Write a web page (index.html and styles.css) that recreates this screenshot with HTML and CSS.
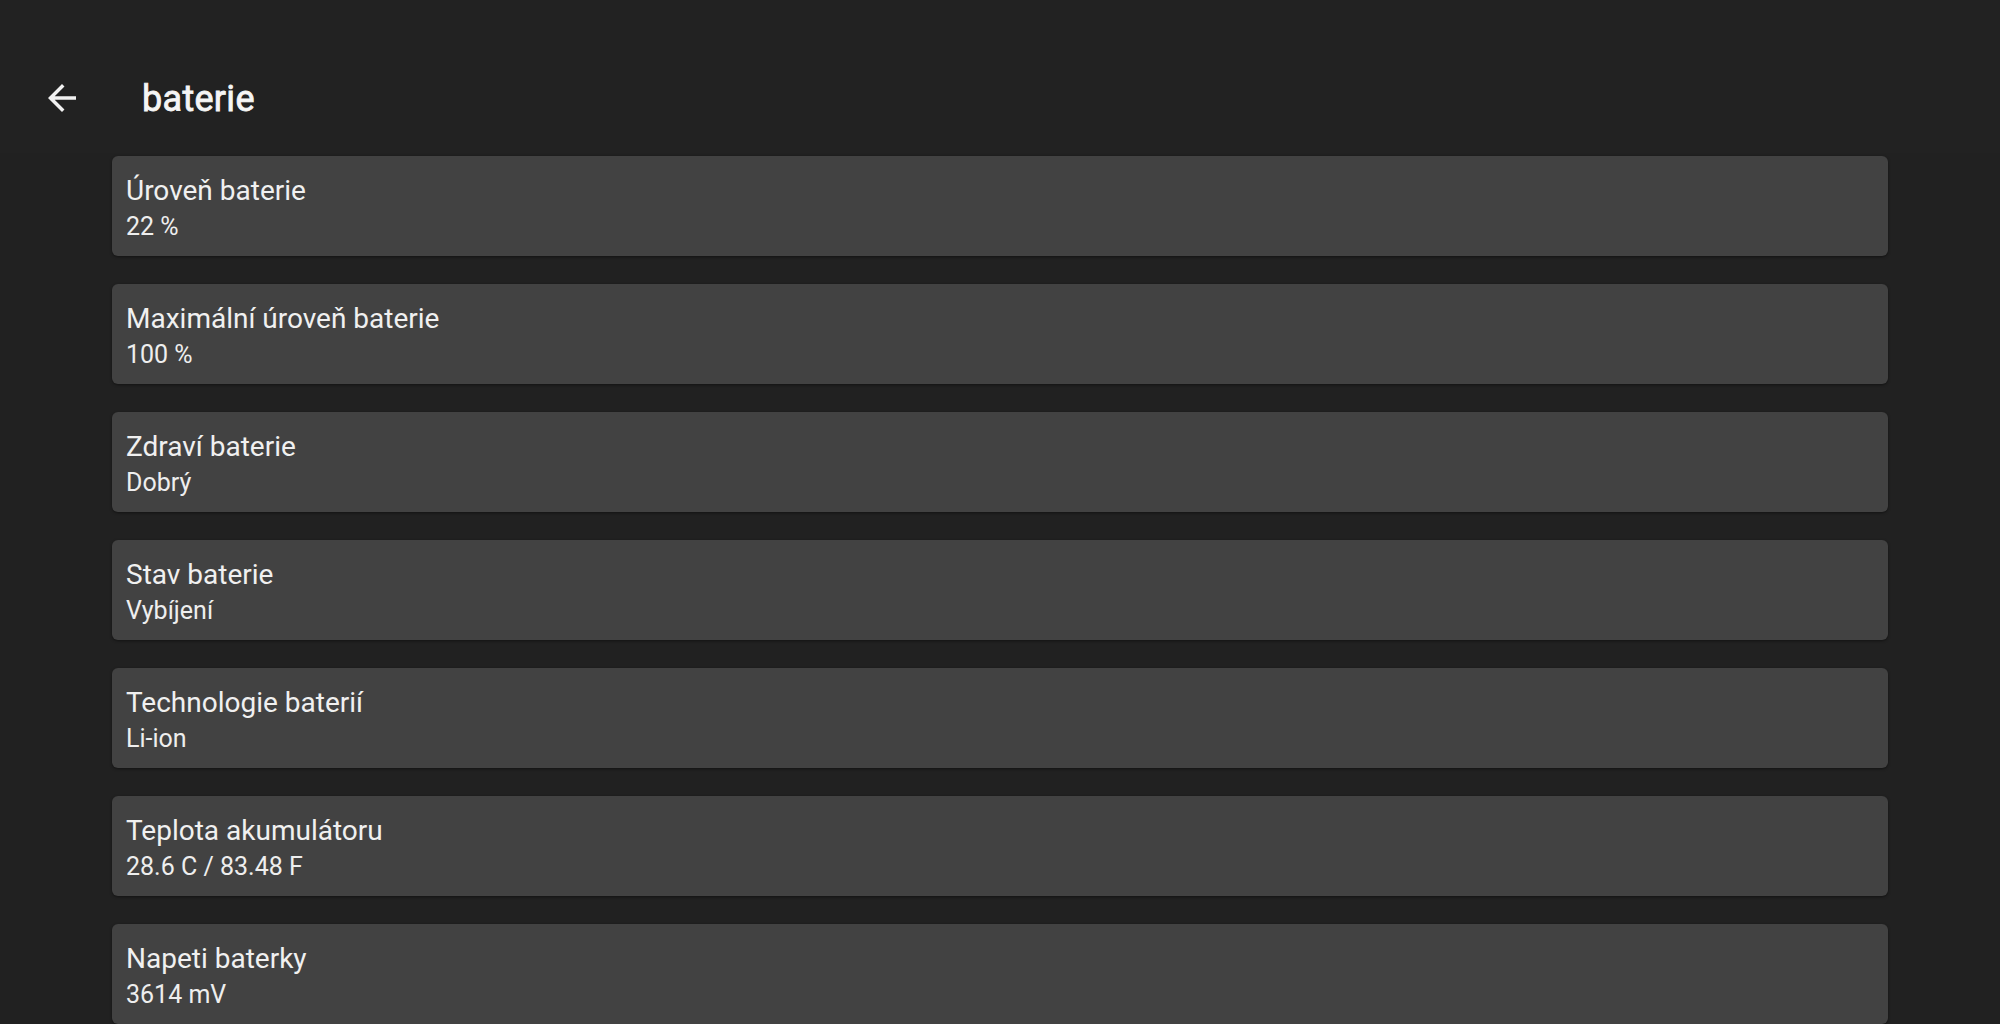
FILE: index.html
```html
<!DOCTYPE html>
<html lang="cs">
<head>
<meta charset="utf-8">
<title>baterie</title>
<link rel="stylesheet" href="styles.css">
</head>
<body>
<header class="toolbar">
  <button class="back" aria-label="Zpět">
    <svg viewBox="0 0 24 24" width="42" height="42"><path fill="currentColor" d="M20 11H7.83l5.59-5.59L12 4l-8 8 8 8 1.41-1.41L7.83 13H20v-2z"/></svg>
  </button>
  <h1 class="title">baterie</h1>
</header>
<main class="list">
  <div class="card"><div class="card-title">Úroveň baterie</div><div class="card-value">22 %</div></div>
  <div class="card"><div class="card-title">Maximální úroveň baterie</div><div class="card-value">100 %</div></div>
  <div class="card"><div class="card-title">Zdraví baterie</div><div class="card-value">Dobrý</div></div>
  <div class="card"><div class="card-title">Stav baterie</div><div class="card-value">Vybíjení</div></div>
  <div class="card"><div class="card-title">Technologie baterií</div><div class="card-value">Li-ion</div></div>
  <div class="card"><div class="card-title">Teplota akumulátoru</div><div class="card-value">28.6 C / 83.48 F</div></div>
  <div class="card"><div class="card-title">Napeti baterky</div><div class="card-value">3614 mV</div></div>
</main>
</body>
</html>
```
FILE: styles.css
```css
html, body {
  margin: 0;
  padding: 0;
  background: #212121;
  font-family: Roboto, "Noto Sans", sans-serif;
  color: #efefef;
  overflow: hidden;
  height: 1024px;
}
.toolbar {
  height: 153px;
  background: #222222;
  display: flex;
  align-items: flex-start;
  box-sizing: border-box;
  padding-top: 77px;
}
.back {
  margin-left: 41px;
  width: 42px;
  height: 42px;
  padding: 0;
  border: 0;
  background: transparent;
  color: #f2f2f2;
  display: flex;
}
.title {
  margin: 0 0 0 59px;
  font-family: Roboto, sans-serif;
  font-size: 36px;
  font-weight: 400;
  -webkit-text-stroke: 0.8px #f5f5f5;
  letter-spacing: 0.3px;
  line-height: 42px;
  color: #f5f5f5;
  position: relative;
  top: 1px;
}
.list {
  display: flex;
  flex-direction: column;
  gap: 28px;
  padding: 3px 112px 0 112px;
}
.card {
  height: 100px;
  box-sizing: border-box;
  background: #424242;
  border-radius: 6px;
  padding: 17px 14px 0 14px;
  box-shadow: 0 1px 3px rgba(0, 0, 0, 0.45);
  flex-shrink: 0;
}
.card-title {
  font-size: 28px;
  line-height: 36px;
  color: #f0f0f0;
}
.card-value {
  font-size: 25px;
  line-height: 30px;
  margin-top: 3px;
  color: #eeeeee;
}
```
